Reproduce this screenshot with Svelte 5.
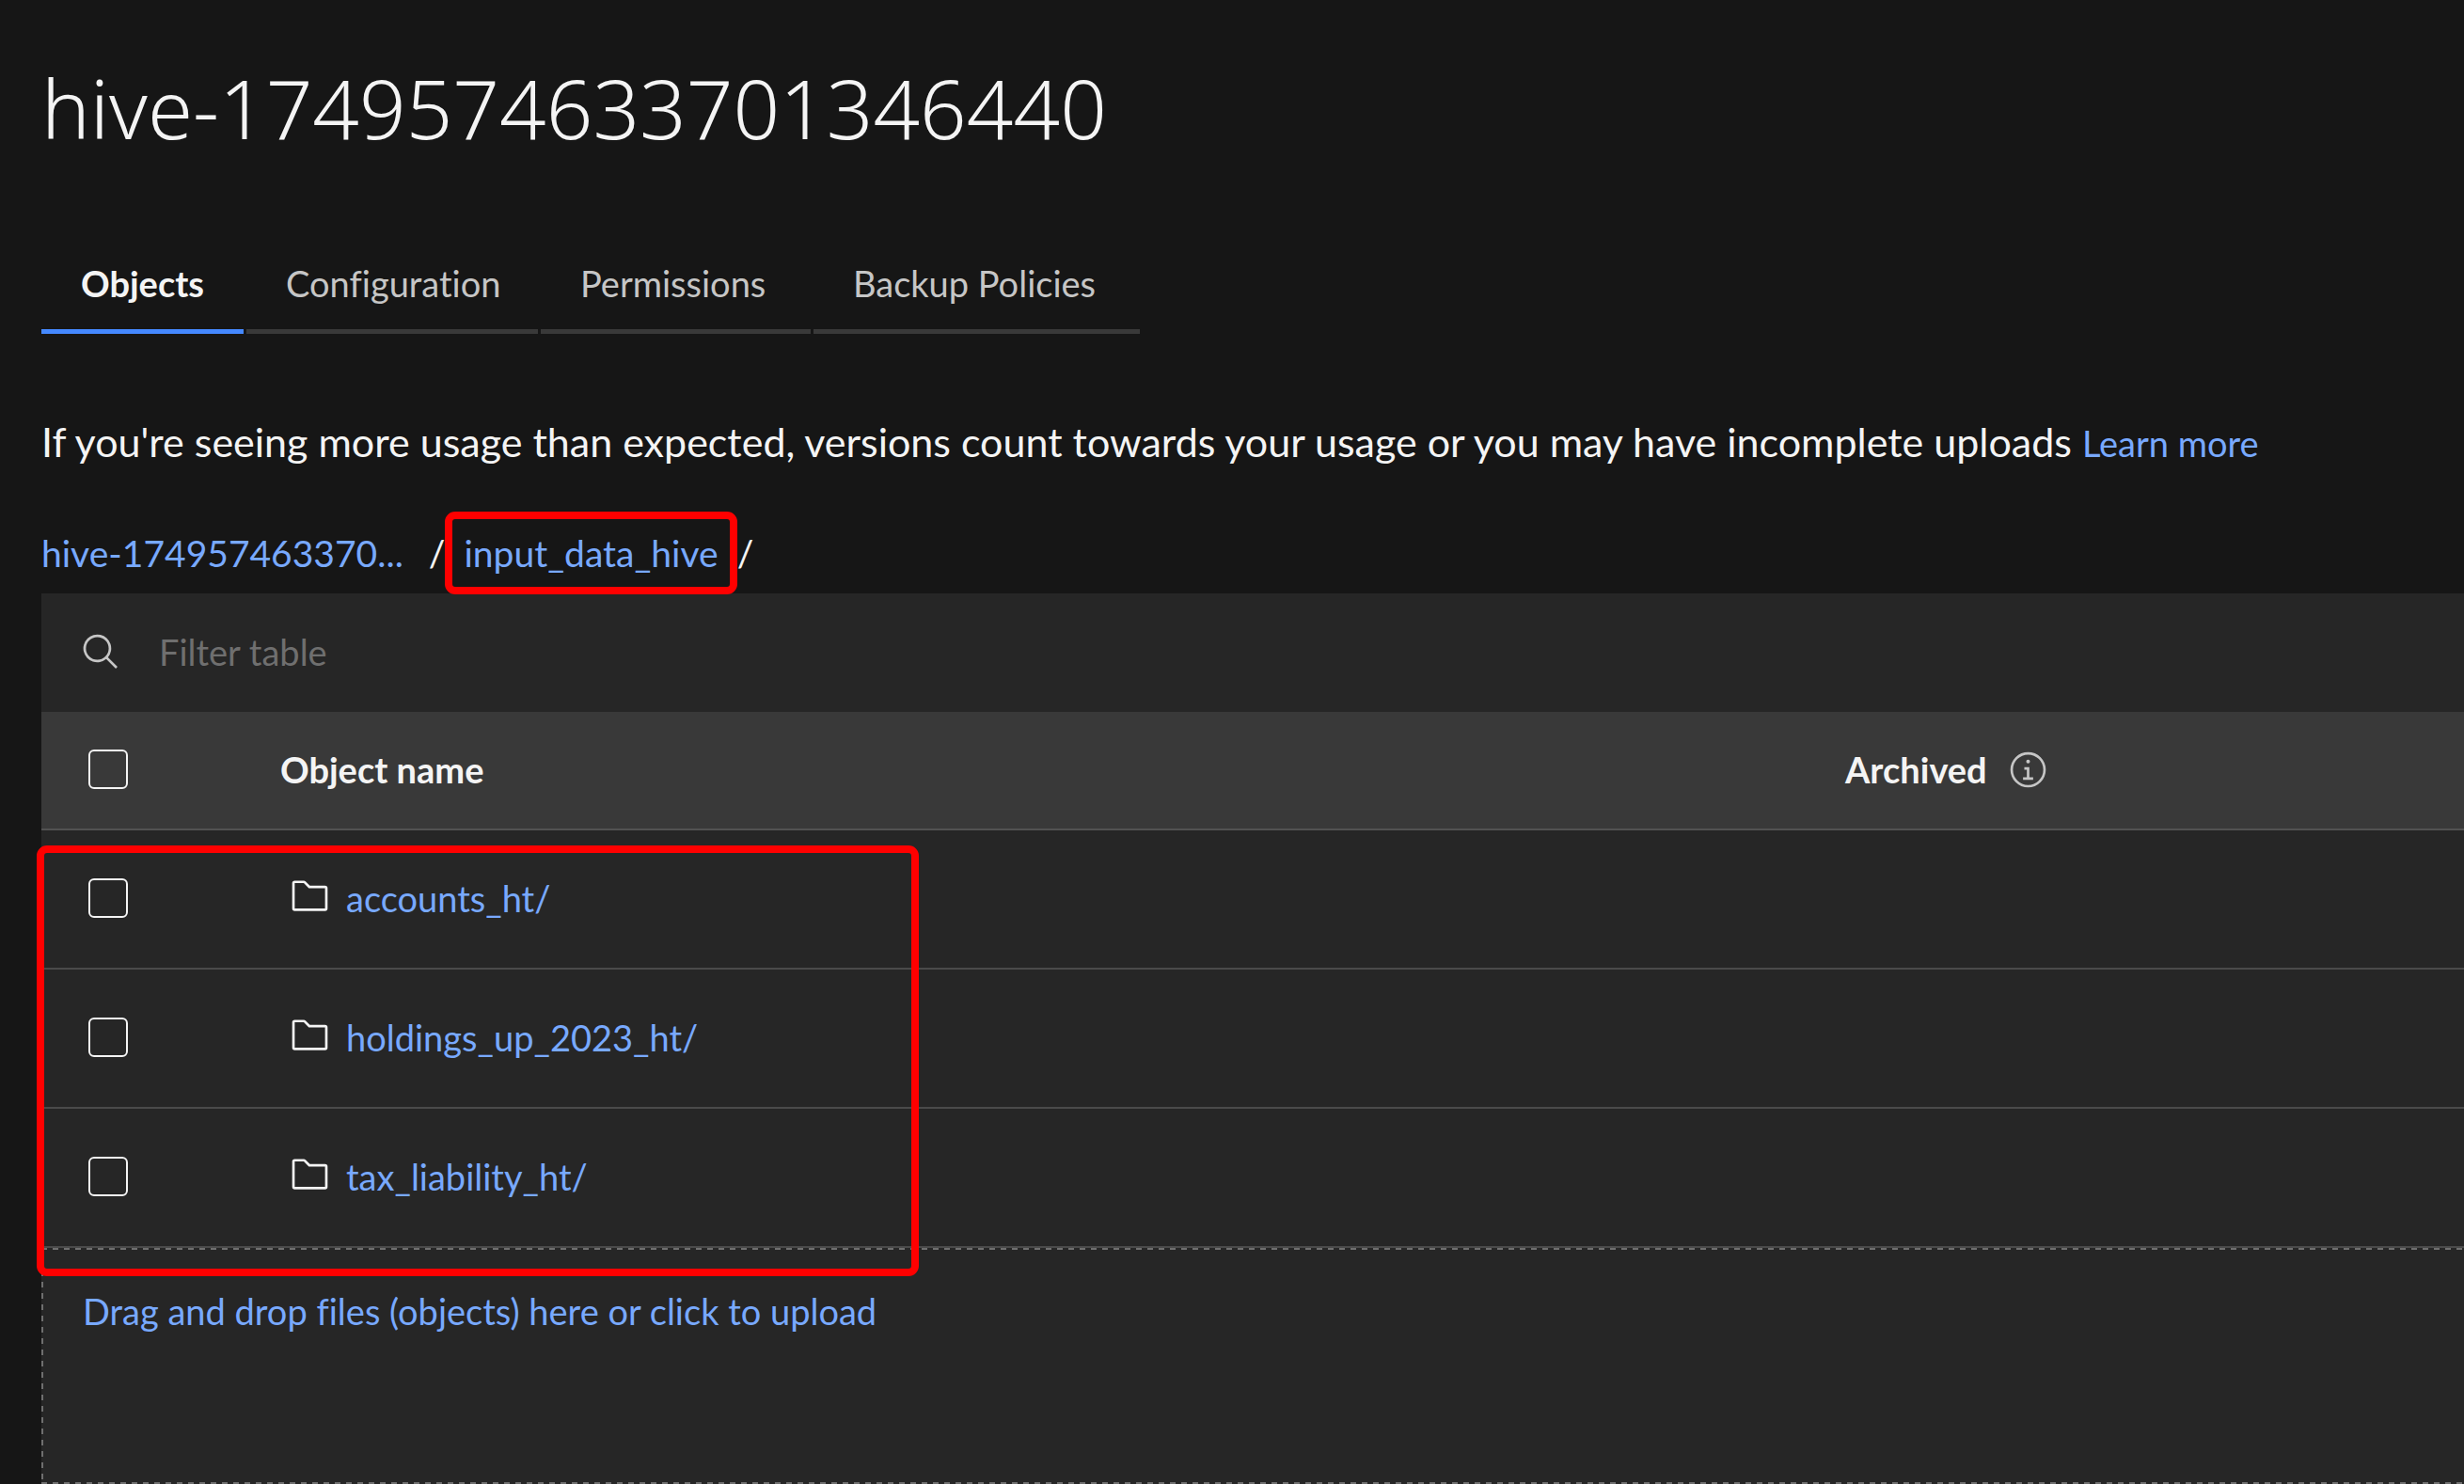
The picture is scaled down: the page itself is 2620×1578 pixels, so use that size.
<script>
  const tabs = ['Objects', 'Configuration', 'Permissions', 'Backup Policies'];
  const objects = ['accounts_ht/', 'holdings_up_2023_ht/', 'tax_liability_ht/'];
  let active = $state('Objects');
  let filter = $state('');
  let selected = $state([]);
  let allSelected = $derived(selected.length === objects.length);

  function toggleAll() {
    selected = allSelected ? [] : [...objects];
  }
</script>

<main>
  <h1>hive-1749574633701346440</h1>

  <div class="tabs" role="tablist">
    {#each tabs as tab}
      <button type="button" role="tab" class="tab" class:active={active === tab} aria-selected={active === tab} onclick={() => (active = tab)}>{tab}</button>
    {/each}
  </div>

  <p class="notice">
    If you're seeing more usage than expected, versions count towards your usage or you may have incomplete uploads
    <a href="#learn">Learn more</a>
  </p>

  <nav class="breadcrumb" aria-label="Path">
    <a class="bucket" href="#bucket">hive-174957463370...</a>
    <span>/</span>
    <a class="marked" href="#folder">input_data_hive</a>
    <span>/</span>
  </nav>

  <section>
    <div class="filter">
      <svg viewBox="0 0 32 32" aria-hidden="true"><path d="M29 27.586l-7.552-7.552a11.018 11.018 0 1 0-1.414 1.414L27.586 29zM4 13a9 9 0 1 1 9 9 9.01 9.01 0 0 1-9-9z" /></svg>
      <input type="text" aria-label="Filter table" placeholder="Filter table" bind:value={filter} />
    </div>

    <div class="listing">
      <table>
        <thead>
          <tr>
            <th class="check"><input type="checkbox" aria-label="Select all objects" checked={allSelected} onchange={toggleAll} /></th>
            <th scope="col">Object name</th>
            <th class="archived" scope="col">
              <div class="heading">
                Archived
                <button type="button" aria-label="About archived objects">
                  <svg viewBox="0 0 32 32" aria-hidden="true"><path d="M17 22v-8h-4v2h2v6h-3v2h8v-2zM16 8a1.5 1.5 0 1 0 1.5 1.5A1.5 1.5 0 0 0 16 8z" /><path d="M16 30a14 14 0 1 1 14-14 14 14 0 0 1-14 14zm0-26a12 12 0 1 0 12 12A12 12 0 0 0 16 4z" /></svg>
                </button>
              </div>
            </th>
          </tr>
        </thead>
        <tbody>
          {#each objects as name}
            <tr>
              <td class="check"><input type="checkbox" aria-label="Select {name}" value={name} bind:group={selected} /></td>
              <td>
                <div class="object">
                  <svg viewBox="0 0 32 32" aria-hidden="true"><path d="M11.17 6l3.42 3.41.58.59H28v16H4V6h7.17m0-2H4a2 2 0 0 0-2 2v20a2 2 0 0 0 2 2h24a2 2 0 0 0 2-2V10a2 2 0 0 0-2-2H16l-3.41-3.41A2 2 0 0 0 11.17 4z" /></svg>
                  <a href="#object">{name}</a>
                </div>
              </td>
              <td></td>
            </tr>
          {/each}
        </tbody>
      </table>
      <div class="outline"></div>
    </div>

    <button type="button" class="dropzone">Drag and drop files (objects) here or click to upload</button>
  </section>
</main>

<style>
  :global(body) {
    margin: 0;
    background: #161616;
  }

  main {
    box-sizing: border-box;
    min-height: 100vh;
    padding: 66px 0 0 44px;
    overflow: hidden;
    color: #f4f4f4;
    font-family: Lato, sans-serif;
    font-size: 38px;
    line-height: 48px;
    font-variant-ligatures: none;
  }

  h1 {
    margin: 0;
    font-family: 'Noto Sans', sans-serif;
    font-size: 87px;
    font-weight: 300;
    line-height: 96px;
  }

  button,
  input {
    font: inherit;
    color: inherit;
    margin: 0;
  }

  a {
    color: #78a9ff;
    text-decoration: none;
  }

  svg {
    display: block;
    flex: none;
    width: 43px;
    height: 43px;
    fill: currentColor;
  }

  .tabs {
    display: grid;
    grid-template-columns: 215px 310px 287px 347px;
    gap: 3px;
    margin-top: 86px;
  }

  .tab {
    height: 107px;
    padding: 4px 0 0 42px;
    border: 0;
    border-bottom: 5px solid #393939;
    background: none;
    color: #c6c6c6;
    text-align: left;
    white-space: nowrap;
  }

  .tab.active {
    border-color: #4589ff;
    color: #f4f4f4;
    font-weight: 700;
  }

  .notice {
    margin: 83px 0 0;
    font-size: 43px;
    line-height: 64px;
  }

  .notice a {
    font-size: 38px;
    line-height: 48px;
  }

  .breadcrumb {
    display: flex;
    align-items: center;
    height: 75px;
    margin-top: 48px;
    padding-bottom: 6px;
    font-size: 39px;
  }

  .bucket {
    margin-right: 27px;
  }

  .marked {
    position: relative;
    margin: 0 20px;
  }

  .marked::after {
    content: '';
    position: absolute;
    inset: -20px;
    border: 8px solid #ff0000;
    border-radius: 11px;
  }

  section {
    background: #262626;
  }

  .filter {
    display: flex;
    align-items: center;
    gap: 40px;
    box-sizing: border-box;
    height: 126px;
    padding: 0 0 2px 42px;
    color: #c6c6c6;
  }

  .filter input {
    flex: 1;
    padding: 0;
    border: 0;
    outline: 0;
    background: none;
  }

  .filter input::placeholder {
    color: #6f6f6f;
    opacity: 1;
  }

  .listing {
    position: relative;
  }

  table {
    width: 100%;
    border-spacing: 0;
    table-layout: fixed;
  }

  th,
  td {
    box-sizing: border-box;
    padding: 0 0 2px;
    text-align: left;
    vertical-align: middle;
  }

  th {
    height: 126px;
    border-bottom: 2px solid #525252;
    background: #393939;
    font-weight: 700;
  }

  td {
    height: 148px;
    border-bottom: 2px solid #4a4a4a;
  }

  .check {
    width: 254px;
    padding: 0 0 2px 50px;
  }

  .archived {
    width: 658px;
  }

  .check input {
    display: block;
    box-sizing: border-box;
    width: 42px;
    height: 42px;
    appearance: none;
    border: 2px solid #f4f4f4;
    border-radius: 6px;
  }

  .check input:checked {
    background: #f4f4f4;
  }

  .heading,
  .object {
    display: flex;
    align-items: center;
  }

  .heading {
    gap: 22px;
  }

  .heading button {
    padding: 0;
    border: 0;
    background: none;
    color: #c6c6c6;
  }

  .object {
    gap: 17px;
    padding-left: 10px;
  }

  .object svg {
    margin-bottom: 5px;
  }

  .outline {
    position: absolute;
    top: 142px;
    left: -5px;
    box-sizing: border-box;
    width: 938px;
    height: 458px;
    border: 8px solid #ff0000;
    border-radius: 11px;
    pointer-events: none;
  }

  .dropzone {
    display: flex;
    align-items: flex-start;
    width: 100%;
    height: 251px;
    padding: 43px 44px;
    border: 0;
    /* top, bottom and left dashed edges: 6px dash, 6px gap */
    background:
      repeating-linear-gradient(90deg, #6f6f6f 0 6px, transparent 6px 12px) top / 100% 2px no-repeat,
      repeating-linear-gradient(90deg, #6f6f6f 0 6px, transparent 6px 12px) bottom / 100% 2px no-repeat,
      repeating-linear-gradient(180deg, #6f6f6f 0 6px, transparent 6px 12px) left / 2px 100% no-repeat;
    color: #78a9ff;
  }
</style>
